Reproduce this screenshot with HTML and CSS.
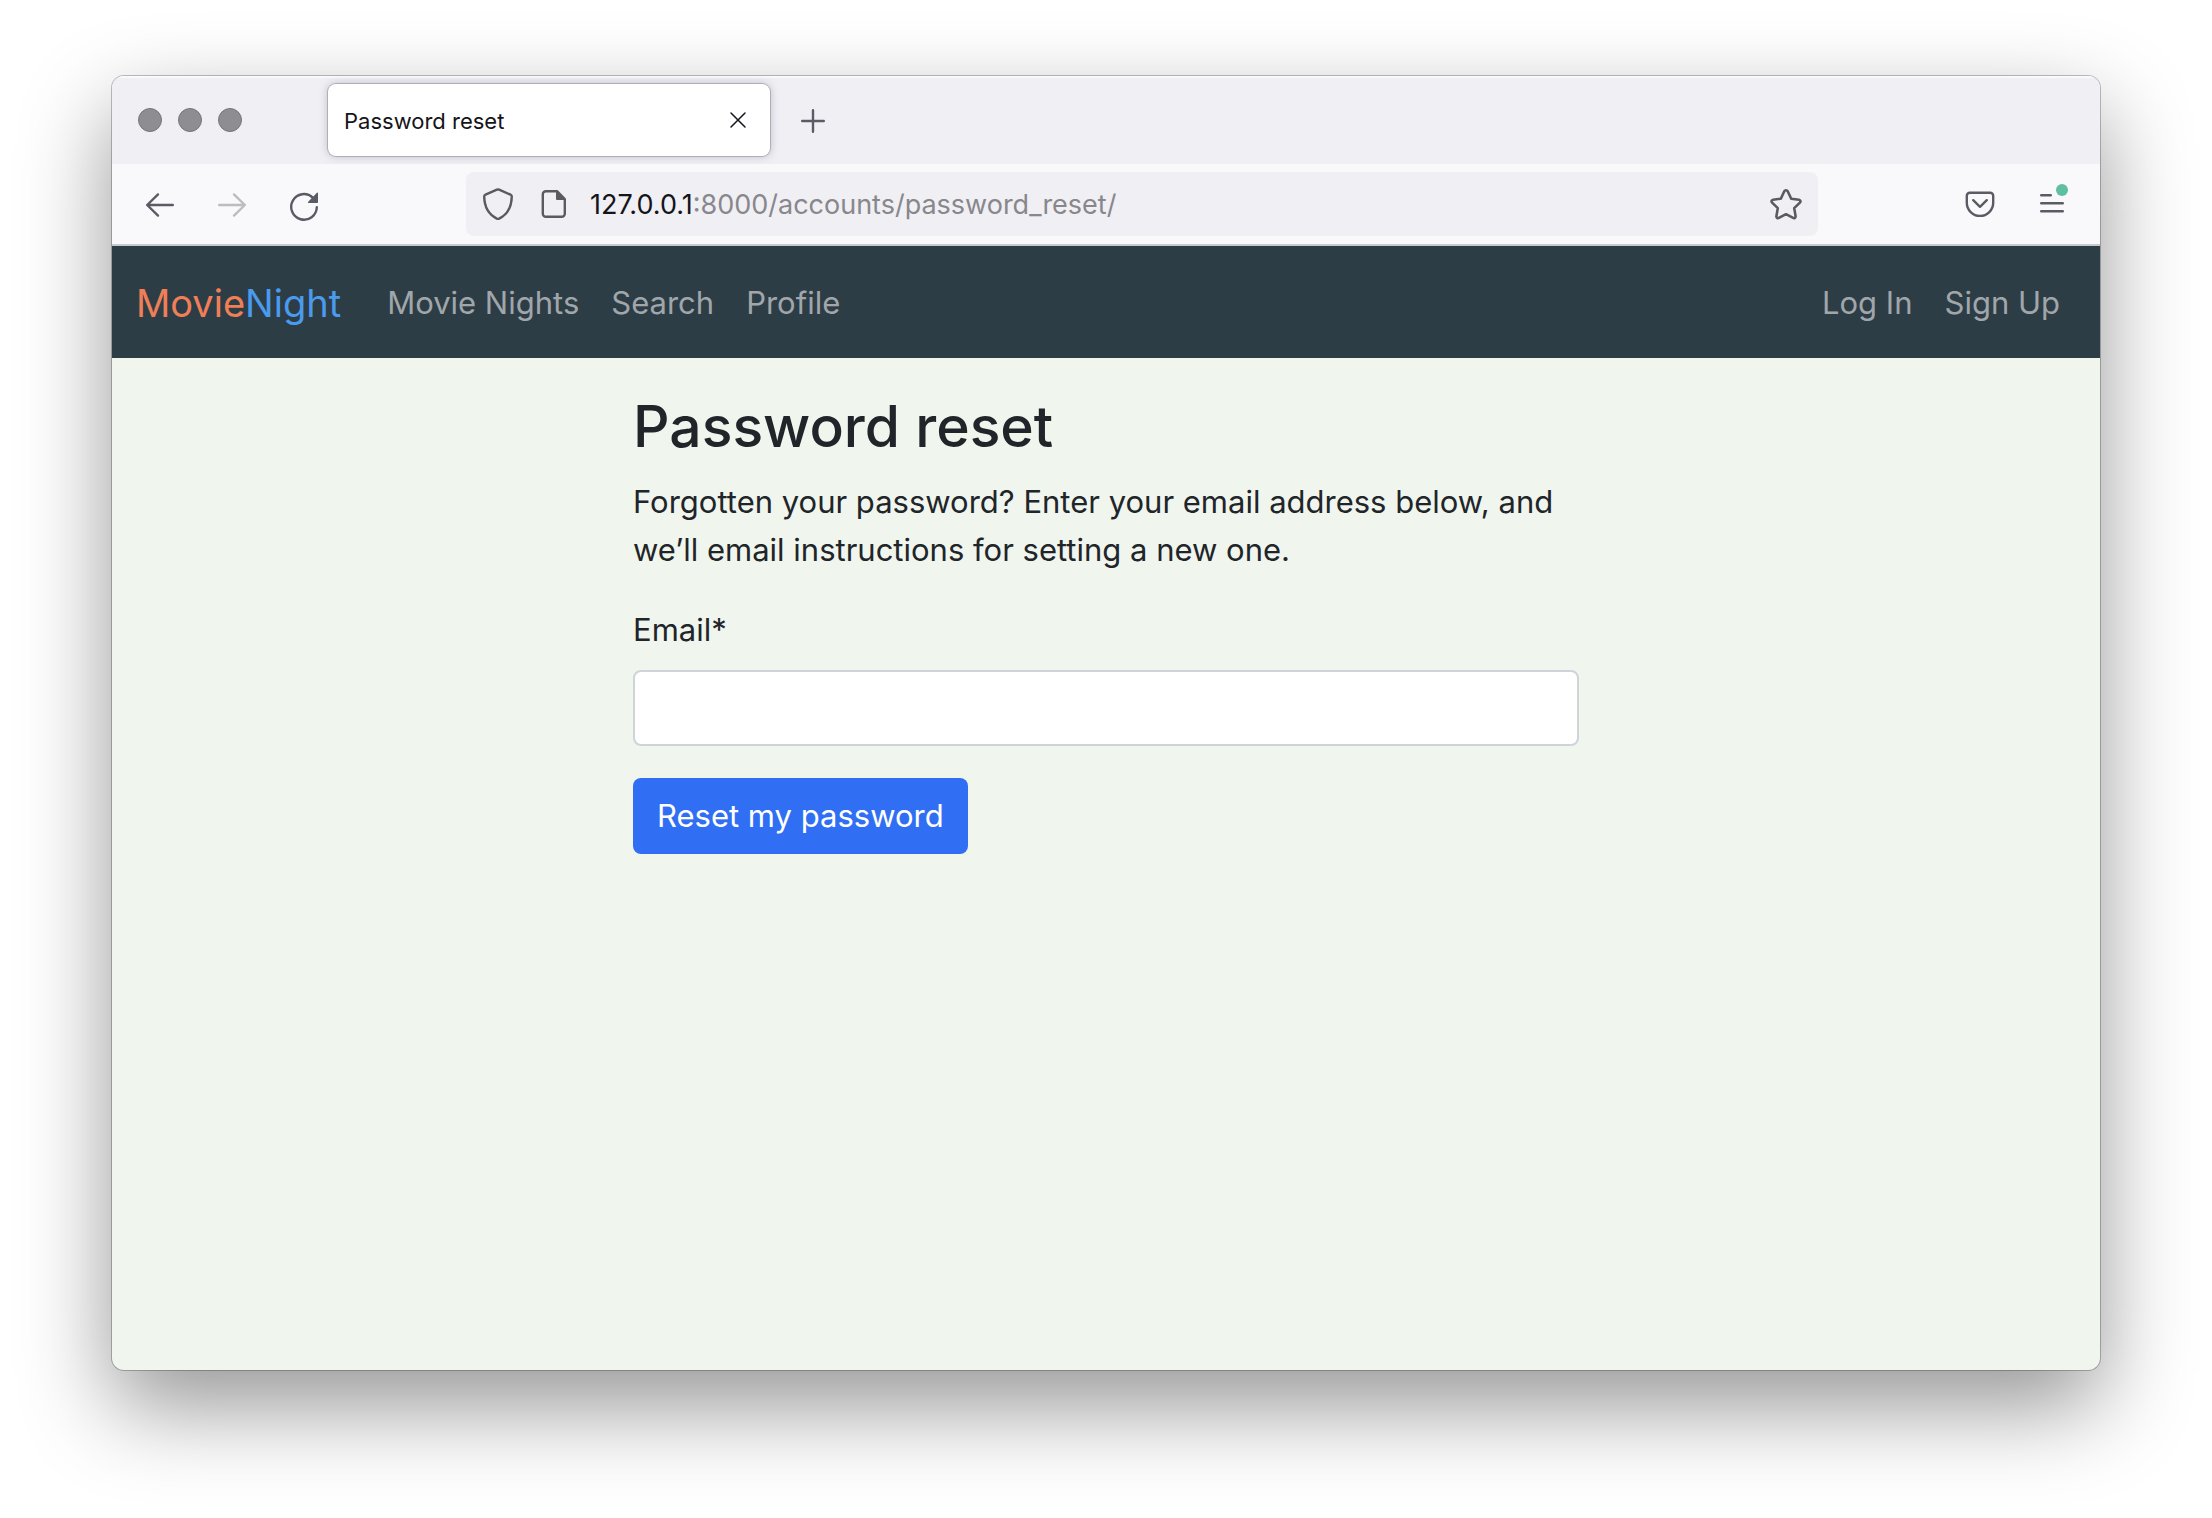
FILE: index.html
```html
<!DOCTYPE html>
<html lang="en">
<head>
<meta charset="utf-8">
<title>Password reset</title>
<link rel="stylesheet" href="styles.css">
</head>
<body>
<div class="window">
  <div class="tab-strip">
    <div class="lights"><span class="light"></span><span class="light"></span><span class="light"></span></div>
    <div class="tab">
      <span class="tab-title">Password reset</span>
      <button class="icon-button" type="button" aria-label="Close tab">
        <svg width="16" height="16" viewBox="0 0 16 16" fill="none" stroke="#15141a" stroke-width="1.5" stroke-linecap="round"><path d="M1 1l14 14M15 1L1 15"/></svg>
      </button>
    </div>
    <button class="icon-button" type="button" aria-label="New tab">
      <svg width="24" height="24" viewBox="0 -1 24 24" fill="none" stroke="#5b5b66" stroke-width="2.4" stroke-linecap="round"><path d="M12 1.2v21.6M1.2 12h21.6"/></svg>
    </button>
  </div>
  <div class="toolbar">
    <div class="history">
      <button class="icon-button" type="button" aria-label="Back">
        <svg width="32" height="32" viewBox="0 -1 32 32" fill="none" stroke="#5b5b66" stroke-width="2.4" stroke-linecap="round" stroke-linejoin="round"><path d="M28.800 16H3.200M14 5.400L3.200 16 14 26.600"/></svg>
      </button>
      <button class="icon-button" type="button" aria-label="Forward" disabled>
        <svg width="32" height="32" viewBox="0 -1 32 32" fill="none" stroke="#bcbcc1" stroke-width="2.4" stroke-linecap="round" stroke-linejoin="round"><path d="M3.200 16h25.600M18 5.400L28.800 16 18 26.600"/></svg>
      </button>
      <button class="icon-button" type="button" aria-label="Reload">
        <svg width="32" height="32" viewBox="0 -2 32 32" fill="none"><path d="M28.800 17.200a12.800 12.800 0 1 1-4-9.600" stroke="#5b5b66" stroke-width="2.400" stroke-linecap="round"/><path d="M30 3.200v9a.8.8 0 0 1-.8.8h-8.400c-.8 0-1.100-.8-.6-1.300l8.500-8.800c.5-.5 1.300-.3 1.300.3z" fill="#5b5b66"/></svg>
      </button>
    </div>
    <div class="address">
      <svg width="32" height="32" viewBox="0 0 32 32" fill="none" stroke="#5b5b5f" stroke-width="2.400" stroke-linejoin="round"><path d="M14.900 1.700L3.500 6.700C2.600 7.100 2.200 7.700 2.200 8.600 2.400 19 6.500 26.500 14.800 30.600c.8.400 1.600.4 2.400 0C25.500 26.500 29.600 19 29.800 8.600c0-.9-.4-1.500-1.300-1.900L17.100 1.700c-.7-.3-1.500-.3-2.200 0z"/></svg>
      <svg width="32" height="32" viewBox="0 0 32 32" fill="none"><path d="M7.800 3.200H19L26.800 11v14.800a3 3 0 0 1-3 3h-16a3 3 0 0 1-3-3V6.200a3 3 0 0 1 3-3z" stroke="#5b5b5f" stroke-width="2.400" stroke-linejoin="round"/><path d="M18 2.400V11a1 1 0 0 0 1 1h8.600z" fill="#5b5b5f"/></svg>
      <span class="url"><span class="url-host">127.0.0.1</span>:8000/accounts/password_reset/</span>
      <button class="icon-button" type="button" aria-label="Bookmark this page">
        <svg width="32" height="32" viewBox="0 0 32 32" fill="none" stroke="#5b5b5f" stroke-width="2.600" stroke-linejoin="round"><path d="M14.300 3.200L10.800 10.700 3 11.700c-1.400.2-2 1.900-.9 2.900l5.700 5.500-1.400 8c-.2 1.500 1.200 2.500 2.500 1.800L16 26.200l7.100 3.700c1.300.7 2.700-.3 2.500-1.800l-1.400-8 5.700-5.500c1.100-1 .5-2.700-.9-2.900l-7.800-1-3.500-7.500c-.7-1.300-2.700-1.300-3.400 0z"/></svg>
      </button>
    </div>
    <div class="tools">
      <button class="icon-button" type="button" aria-label="Save to Pocket">
        <svg width="32" height="32" viewBox="0 0 32 32" fill="none" stroke="#5b5b66" stroke-width="2.400" stroke-linecap="round" stroke-linejoin="round"><path d="M5.800 4.700h20.400a3 3 0 0 1 3 3v7a13.200 13.200 0 0 1-26.400 0v-7a3 3 0 0 1 3-3z"/><path d="M9.200 12.200L16 18.800l6.800-6.600"/></svg>
      </button>
      <button class="icon-button" type="button" aria-label="Menu">
        <svg width="32" height="32" viewBox="0 0 32 32" fill="none"><path d="M5.200 7.200h9.600M5.200 15.200h21.600M5.200 23.200h21.600" stroke="#5b5b66" stroke-width="2.400" stroke-linecap="round"/><circle cx="26" cy="2" r="6" fill="#5fbfa3"/></svg>
      </button>
    </div>
  </div>
  <nav class="navbar">
    <a class="brand" href="#"><span class="brand-movie">Movie</span><span class="brand-night">Night</span></a>
    <div class="nav-links">
      <a class="nav-link" href="#">Movie Nights</a>
      <a class="nav-link" href="#">Search</a>
      <a class="nav-link" href="#">Profile</a>
    </div>
    <div class="nav-links account-links">
      <a class="nav-link" href="#">Log In</a>
      <a class="nav-link" href="#">Sign Up</a>
    </div>
  </nav>
  <main class="page">
    <div class="column">
      <h1 class="title">Password reset</h1>
      <p class="intro">Forgotten your password? Enter your email address below, and we’ll email instructions for setting a new one.</p>
      <form class="form">
        <label class="label" for="email">Email*</label>
        <input class="input" id="email" type="email" name="email" required>
        <button class="submit" type="submit">Reset my password</button>
      </form>
    </div>
  </main>
</div>
</body>
</html>
```

FILE: styles.css
```css
* {
  box-sizing: border-box;
}

body {
  display: flex;
  min-height: 100vh;
  margin: 0;
  padding: 76px 112px 148px;
  background: #fff;
  color: #212529;
  font-family: Inter, "Liberation Sans", sans-serif;
  font-size: 31px;
  line-height: 48px;
}

.window {
  display: flex;
  flex: 1;
  flex-direction: column;
  overflow: hidden;
  border-radius: 12px;
  background: #f0f5ee;
  box-shadow: 0 0 0 1px rgba(0, 0, 0, 0.24), 0 36px 90px rgba(0, 0, 0, 0.42);
}

.icon-button {
  display: flex;
  padding: 0;
  border: 0;
  background: none;
}

svg {
  display: block;
  flex: none;
  overflow: visible;
}

/* Browser chrome */
.tab-strip {
  display: flex;
  align-items: center;
  height: 88px;
  padding-left: 26px;
  background: #f0eff4;
  box-shadow: inset 0 2px 1px #fafafc;
}

.lights {
  display: flex;
  gap: 16px;
  margin-right: 86px;
}

.light {
  width: 24px;
  height: 24px;
  border: 1px solid #78777b;
  border-radius: 50%;
  background: #8e8d92;
}

.tab {
  display: flex;
  align-items: center;
  justify-content: space-between;
  width: 442px;
  height: 72px;
  margin-right: 31px;
  padding: 0 24px 0 16px;
  border-radius: 8px;
  background: #fff;
  box-shadow: 0 0 0 1px rgba(128, 128, 142, 0.45), 0 0 8px rgba(128, 128, 142, 0.5);
}

.tab-title {
  padding-top: 2px;
  color: #15141a;
  font-size: 22px;
}

.toolbar {
  display: flex;
  align-items: center;
  height: 82px;
  padding: 0 32px;
  border-bottom: 2px solid #c9c9cc;
  background: #f9f9fb;
}

.history,
.tools {
  display: flex;
  gap: 40px;
}

.address {
  display: flex;
  flex: 1;
  align-items: center;
  gap: 24px;
  height: 64px;
  margin: 0 146px;
  padding: 0 16px;
  border-radius: 8px;
  background: #f0eff4;
}

.url {
  flex: 1;
  margin-left: -4px;
  padding-top: 2px;
  color: #88878c;
  font-size: 27px;
}

.url-host {
  color: #15141a;
}

/* Site */
.navbar {
  display: flex;
  align-items: center;
  height: 112px;
  padding: 2px 24px 0;
  background: #2d3d46;
}

.brand {
  margin-right: 30px;
  font-size: 38px;
  text-decoration: none;
}

.brand-movie {
  color: #f07f58;
}

.brand-night {
  color: #4a9aee;
}

.nav-links {
  display: flex;
}

.account-links {
  margin-left: auto;
}

.nav-link {
  padding: 0 16px;
  color: #a0a6aa;
  text-decoration: none;
}

.page {
  display: flex;
  justify-content: center;
  padding-top: 32px;
}

.column {
  width: 50%;
  padding: 0 24px;
}

.title {
  margin: 0 0 14px;
  font-size: 57px;
  font-weight: 500;
  line-height: 74px;
}

.intro {
  margin: 0 0 32px;
}

.form {
  display: flex;
  flex-direction: column;
  align-items: flex-start;
}

.label {
  margin-bottom: 16px;
}

.input {
  width: 100%;
  height: 76px;
  margin-bottom: 32px;
  padding: 12px 24px;
  border: 2px solid #ced4da;
  border-radius: 8px;
  background: #fff;
  color: inherit;
  font: inherit;
}

.submit {
  height: 76px;
  padding: 0 24px;
  border: 0;
  border-radius: 8px;
  background: #306ff4;
  color: #fff;
  font: inherit;
}
```
